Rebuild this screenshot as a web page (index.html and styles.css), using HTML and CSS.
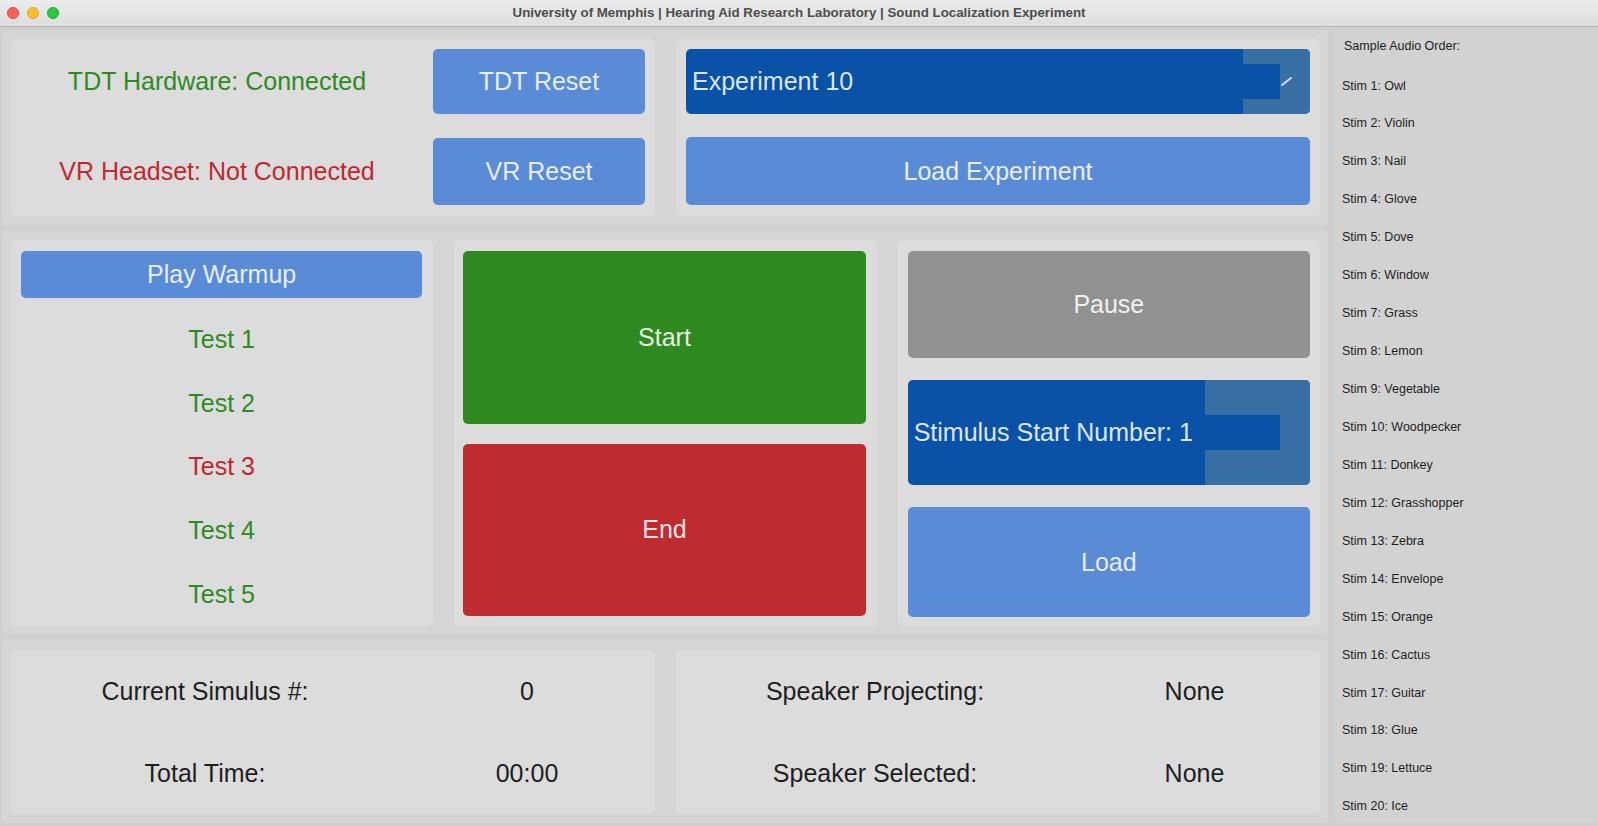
FILE: index.html
```html
<!DOCTYPE html>
<html>
<head>
<meta charset="utf-8">
<link rel="stylesheet" href="styles.css">
</head>
<body>
<div class="window">
  <div class="titlebar">
    <div class="lights">
      <span class="light red"></span>
      <span class="light yellow"></span>
      <span class="light green"></span>
    </div>
    <div class="title">University of Memphis | Hearing Aid Research Laboratory | Sound Localization Experiment</div>
  </div>
  <div class="main">
    <div class="content">
      <section class="frame frame-top">
        <div class="panel status-panel">
          <div class="status ok">TDT Hardware: Connected</div>
          <button class="btn blue">TDT Reset</button>
          <div class="status bad">VR Headset: Not Connected</div>
          <button class="btn blue">VR Reset</button>
        </div>
        <div class="panel exp-panel">
          <div class="combo">
            <div class="combo-text">Experiment 10</div>
            <div class="combo-side">
              <div class="combo-strip"></div>
              <svg class="combo-arrow" width="12" height="12" viewBox="0 0 12 12"><path d="M1 10 L10 3" stroke="#cfe0f6" stroke-width="2" stroke-linecap="round"/></svg>
            </div>
          </div>
          <button class="btn blue">Load Experiment</button>
        </div>
      </section>
      <section class="frame frame-mid">
        <div class="panel tests-panel">
          <button class="btn blue warmup">Play Warmup</button>
          <div class="tests">
            <div class="test ok">Test 1</div>
            <div class="test ok">Test 2</div>
            <div class="test bad">Test 3</div>
            <div class="test ok">Test 4</div>
            <div class="test ok">Test 5</div>
          </div>
        </div>
        <div class="panel run-panel">
          <button class="btn green">Start</button>
          <button class="btn red">End</button>
        </div>
        <div class="panel ctrl-panel">
          <button class="btn gray">Pause</button>
          <div class="combo spin">
            <div class="combo-text">Stimulus Start Number: 1</div>
            <div class="combo-side wide">
              <div class="combo-strip"></div>
            </div>
          </div>
          <button class="btn blue">Load</button>
        </div>
      </section>
      <section class="frame frame-bot">
        <div class="panel info-panel">
          <div class="info-label">Current Simulus #:</div>
          <div class="info-value">0</div>
          <div class="info-label">Total Time:</div>
          <div class="info-value">00:00</div>
        </div>
        <div class="panel info-panel shifted">
          <div class="info-label">Speaker Projecting:</div>
          <div class="info-value">None</div>
          <div class="info-label">Speaker Selected:</div>
          <div class="info-value">None</div>
        </div>
      </section>
    </div>
    <aside class="sidebar">
      <div class="side-head">Sample Audio Order:</div>
      <div class="stim">Stim 1: Owl</div>
      <div class="stim">Stim 2: Violin</div>
      <div class="stim">Stim 3: Nail</div>
      <div class="stim">Stim 4: Glove</div>
      <div class="stim">Stim 5: Dove</div>
      <div class="stim">Stim 6: Window</div>
      <div class="stim">Stim 7: Grass</div>
      <div class="stim">Stim 8: Lemon</div>
      <div class="stim">Stim 9: Vegetable</div>
      <div class="stim">Stim 10: Woodpecker</div>
      <div class="stim">Stim 11: Donkey</div>
      <div class="stim">Stim 12: Grasshopper</div>
      <div class="stim">Stim 13: Zebra</div>
      <div class="stim">Stim 14: Envelope</div>
      <div class="stim">Stim 15: Orange</div>
      <div class="stim">Stim 16: Cactus</div>
      <div class="stim">Stim 17: Guitar</div>
      <div class="stim">Stim 18: Glue</div>
      <div class="stim">Stim 19: Lettuce</div>
      <div class="stim">Stim 20: Ice</div>
    </aside>
  </div>
</div>
</body>
</html>
```
FILE: styles.css
```css
* { box-sizing: border-box; }
html, body { margin: 0; padding: 0; }
body {
  width: 1598px;
  height: 826px;
  overflow: hidden;
  font-family: "Liberation Sans", Arial, sans-serif;
  background: #cfcfcf;
}
.window {
  width: 1598px;
  height: 826px;
  display: flex;
  flex-direction: column;
}
.titlebar {
  height: 27px;
  flex: 0 0 27px;
  background: linear-gradient(#ececec, #dedede);
  border-bottom: 1px solid #b5b5b5;
  display: flex;
  align-items: center;
  position: relative;
}
.lights {
  display: flex;
  gap: 8px;
  padding-left: 7px;
}
.light {
  width: 12px;
  height: 12px;
  border-radius: 50%;
  display: block;
}
.light.red { background: #fe5f57; border: 1px solid #e0443e; }
.light.yellow { background: #febc2e; border: 1px solid #dea123; }
.light.green { background: #28c840; border: 1px solid #1aab29; }
.title {
  position: absolute;
  left: 0;
  right: 0;
  top: 0;
  line-height: 26px;
  text-align: center;
  font-size: 13.3px;
  font-weight: bold;
  color: #4d4d4d;
}
.main {
  flex: 1;
  display: flex;
  padding: 3px 0 3px 2px;
  gap: 7px;
  min-height: 0;
}
.content {
  width: 1326px;
  display: flex;
  flex-direction: column;
  gap: 6px;
}
.frame {
  background: #d5d5d5;
  border-radius: 4px;
  padding: 9px 8px 9px 9px;
  display: grid;
  gap: 21px;
}
.frame-top { height: 195px; grid-template-columns: 1fr 1fr; }
.frame-mid { height: 403px; grid-template-columns: 1fr 1fr 1fr; padding-bottom: 10px; }
.frame-bot { height: 183px; grid-template-columns: 1fr 1fr; padding-top: 10px; }
.panel {
  background: #dcdcdc;
  border-radius: 5px;
  padding: 10px;
}
.btn {
  border: none;
  border-radius: 5px;
  font-family: "Liberation Sans", Arial, sans-serif;
  font-size: 25px;
  color: #e6eefa;
  padding: 0;
  margin: 0;
  display: flex;
  align-items: center;
  justify-content: center;
}
.btn.blue { background: #5a8bd6; }
.btn.green { background: #2e8a1e; color: #e4f0e0; }
.btn.red { background: #be2c2f; color: #f6e4e6; }
.btn.gray { background: #919191; color: #f0f0f0; }
.status-panel {
  display: grid;
  grid-template-columns: 1fr 212px;
  grid-template-rows: 65px 67px;
  row-gap: 24px;
  column-gap: 20px;
  padding-bottom: 11px;
}
.status {
  font-size: 25px;
  display: flex;
  align-items: center;
  justify-content: center;
}
.ok { color: #2e8a22; }
.bad { color: #c0282e; }
.exp-panel {
  display: grid;
  grid-template-rows: 65px 68px;
  row-gap: 23px;
  padding-bottom: 11px;
}
.combo {
  display: flex;
  background: #0a51a8;
  border-radius: 5px;
  overflow: hidden;
}
.combo-text {
  flex: 1;
  display: flex;
  align-items: center;
  padding-left: 6px;
  font-size: 25px;
  color: #dbe7f8;
}
.combo-side {
  width: 67px;
  background: #386fa2;
  display: flex;
  align-items: center;
  position: relative;
}
.combo-side.wide { width: 105px; }
.combo-strip {
  width: 37px;
  height: 35px;
  background: #0a51a8;
}
.combo-side.wide .combo-strip { width: 75px; }
.combo-arrow {
  margin-left: 1px;
  margin-top: -2px;
}
.tests-panel {
  display: flex;
  flex-direction: column;
  padding: 11px 11px 0 10px;
}
.warmup {
  height: 47px;
  flex: 0 0 47px;
}
.tests {
  flex: 1;
  display: flex;
  flex-direction: column;
  padding-top: 10px;
}
.test {
  flex: 1;
  display: flex;
  align-items: center;
  justify-content: center;
  font-size: 25px;
}
.run-panel {
  display: grid;
  grid-template-rows: 1fr 1fr;
  row-gap: 20px;
  padding: 11px 11px 10px 9px;
}
.ctrl-panel {
  display: grid;
  grid-template-rows: 107px 105px 110px;
  row-gap: 22px;
  padding: 11px 10px 9px 10px;
}
.info-panel {
  display: grid;
  grid-template-columns: 388px 1fr;
  grid-template-rows: 1fr 1fr;
  padding: 0;
}
.info-panel.shifted { padding-left: 5px; grid-template-columns: 388px 1fr; }
.info-label, .info-value {
  display: flex;
  align-items: center;
  justify-content: center;
  font-size: 25px;
  color: #1e1e1e;
}
.sidebar {
  flex: 1;
  background: #d2d2d2;
  border-radius: 4px;
  padding: 9px 0 0 7px;
  display: flex;
  flex-direction: column;
  overflow: hidden;
}
.side-head {
  font-size: 12.5px;
  color: #1e1e1e;
  height: 38.5px;
  flex: 0 0 38.5px;
  padding-left: 2px;
}
.stim {
  font-size: 12.5px;
  color: #1e1e1e;
  height: 37.95px;
  flex: 0 0 37.95px;
  line-height: 16px;
}
```
